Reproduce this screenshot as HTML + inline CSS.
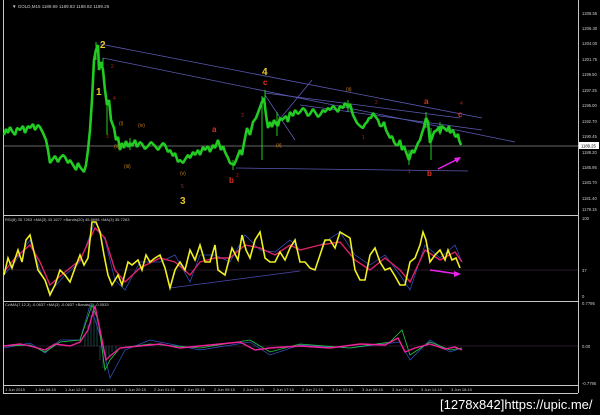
<!DOCTYPE html>
<html><head><meta charset="utf-8"><style>
html,body{margin:0;padding:0;background:#000;width:600px;height:415px;overflow:hidden}
svg{display:block}
text{font-family:"Liberation Sans",sans-serif}
</style></head><body>
<svg width="600" height="415" viewBox="0 0 600 415">
<rect width="600" height="415" fill="#000"/>
<g stroke="#c8c8c8" stroke-width="1" fill="none">
<line x1="3.5" y1="0" x2="3.5" y2="393"/>
<line x1="578.5" y1="0" x2="578.5" y2="393"/>
<line x1="3" y1="215.5" x2="578" y2="215.5"/>
<line x1="3" y1="301.5" x2="578" y2="301.5"/>
<line x1="3" y1="385.5" x2="578" y2="385.5"/>
<line x1="3" y1="393.5" x2="578" y2="393.5"/>
</g>
<line x1="4" y1="146" x2="578" y2="146" stroke="#888" stroke-width="0.8"/>
<line x1="4" y1="270" x2="578" y2="270" stroke="#553355" stroke-width="0.6"/>
<line x1="4" y1="346" x2="578" y2="346" stroke="#553355" stroke-width="0.6"/>
<text x="12" y="8" font-size="4.5" fill="#ccc">▼ GOLD,M15  1189.69 1189.83 1188.82 1189.25</text>
<g stroke="#5a5ab4" stroke-width="0.8" fill="none">
<line x1="100" y1="44" x2="482" y2="118"/>
<line x1="103" y1="58" x2="515" y2="142"/>
<line x1="236" y1="168" x2="468" y2="171"/>
<line x1="265" y1="95" x2="295" y2="140"/>
<line x1="275" y1="125" x2="312" y2="80"/>
<line x1="300" y1="105" x2="482" y2="130"/>
<line x1="265" y1="93" x2="460" y2="118"/>
</g>
<polyline fill="none" stroke="#22cc22" stroke-width="2.6" stroke-linejoin="bevel" points="4,135 6,129 8,133 10,127 12,131 15,135 17,128 20,130 23,126 25,133 28,126 30,128 33,124 35,130 38,125 40,127 43,133 46,140 48,150 50,163 52,160 55,156 58,162 60,158 63,155 65,157 68,163 70,160 73,165 76,170 78,163 80,167 84,172 86,165 88,150 90,130 92,100 94,60 96,50 98,45 99,70 101,62 103,70 105,90 107,105 109,100 111,120 114,128 116,140 118,137 120,150 122,143 124,148 126,141 128,147 130,143 132,146 135,140 137,147 140,142 142,144 145,149 148,146 151,142 155,146 158,150 160,147 163,143 165,145 168,152 170,150 173,156 175,153 178,162 180,160 183,163 186,158 188,155 190,158 193,152 195,155 198,150 200,155 203,147 205,150 208,146 210,152 213,145 215,148 218,140 221,150 223,146 225,152 228,158 230,163 234,165 237,158 240,150 242,155 244,143 247,128 250,135 253,122 256,118 259,110 262,102 264,98 266,115 268,128 270,122 272,127 274,120 276,124 278,126 280,118 282,120 286,116 288,122 290,112 293,116 295,110 298,114 300,112 303,108 305,110 308,116 310,114 313,109 315,112 318,117 320,115 323,110 325,112 328,108 330,110 333,106 335,108 338,112 340,106 343,108 345,103 348,107 350,104 353,115 355,119 357,123 360,126 363,128 365,124 367,122 369,118 371,118 373,113 375,116 378,120 380,126 382,126 384,122 386,130 388,134 390,138 392,136 394,142 396,145 398,145 400,140 402,150 404,146 406,152 409,160 412,150 414,153 416,148 418,143 420,140 422,133 424,127 426,118 428,122 430,143 432,138 434,132 437,130 439,127 440,133 442,126 444,128 447,131 449,126 450,133 453,130 455,136 456,137 458,134 459,140 461,145"/>
<g stroke="#22cc22" stroke-width="1">
<line x1="96" y1="42" x2="96" y2="60"/><line x1="103" y1="58" x2="103" y2="78"/><line x1="107" y1="105" x2="107" y2="135"/><line x1="130" y1="138" x2="130" y2="150"/><line x1="233" y1="160" x2="233" y2="170"/><line x1="262" y1="96" x2="262" y2="160"/><line x1="265" y1="90" x2="265" y2="110"/><line x1="277" y1="112" x2="277" y2="136"/><line x1="348" y1="100" x2="348" y2="112"/><line x1="409" y1="150" x2="409" y2="165"/><line x1="426" y1="112" x2="426" y2="128"/><line x1="431" y1="128" x2="431" y2="160"/><line x1="440" y1="122" x2="440" y2="135"/>
</g>
<g font-weight="bold">
<text x="100" y="48" font-size="10" fill="#e8c82a">2</text>
<text x="96" y="95" font-size="10" fill="#e8c82a">1</text>
<text x="180" y="204" font-size="10" fill="#e8c82a">3</text>
<text x="262" y="75" font-size="10" fill="#e8c82a">4</text>
<text x="263" y="85" font-size="8" fill="#e03020">c</text>
<text x="212" y="132" font-size="8" fill="#e03020">a</text>
<text x="229" y="183" font-size="8" fill="#e03020">b</text>
<text x="424" y="104" font-size="8" fill="#e03020">a</text>
<text x="427" y="176" font-size="8" fill="#e03020">b</text>
<text x="458" y="117" font-size="8" fill="#e03020">c</text>
</g>
<g font-size="5" fill="#c08020">
<text x="119" y="125">(i)</text><text x="138" y="127">(iv)</text><text x="114" y="148">(ii)</text>
<text x="124" y="168">(iii)</text><text x="180" y="175">(v)</text><text x="276" y="147">(ii)</text><text x="346" y="91">(ii)</text>
</g>
<g font-size="5" fill="#b02020">
<text x="111" y="68">2</text><text x="113" y="100">4</text><text x="106" y="138">3</text><text x="181" y="188">5</text>
<text x="241" y="117">3</text><text x="236" y="177">2</text><text x="375" y="104">2</text><text x="362" y="139">1</text><text x="408" y="173">1</text><text x="460" y="105">4</text>
</g>
<polyline points="438,169 458,159" stroke="#ee22ee" stroke-width="1.5" fill="none"/>
<polygon points="461,157 454,158 457,163" fill="#ee22ee"/>
<g font-size="4.2" fill="#ccc">
<text x="582" y="15">1208.55</text><text x="582" y="30">1206.30</text><text x="582" y="45">1204.00</text>
<text x="582" y="61">1201.75</text><text x="582" y="76">1199.50</text><text x="582" y="92">1197.25</text>
<text x="582" y="107">1195.00</text><text x="582" y="123">1192.70</text><text x="582" y="138">1190.45</text>
<text x="582" y="154">1188.20</text><text x="582" y="169">1185.95</text><text x="582" y="184">1183.70</text><text x="582" y="200">1181.40</text>
<text x="582" y="211">1179.15</text><text x="582" y="220">100</text><text x="582" y="272">37</text><text x="582" y="298">0</text>
<text x="582" y="305">0.7795</text><text x="582" y="348">0.00</text><text x="582" y="385">-0.7795</text>
</g>
<rect x="579" y="142" width="20" height="7" fill="#fff"/>
<text x="581" y="147.5" font-size="4.2" fill="#000">1189.25</text>
<g font-size="4" fill="#ccc">
<text x="5" y="221">RSI(8) 35.7263   ×MA(3) 43.1677   ×Bands(20) 45.8698   ×MA(3) 35.7263</text>
<text x="5" y="306">CciMA(7,12,3) -0.0637   ×MA(3) -0.0637   ×Bands(3) -0.0533</text>
<text x="5" y="391">1 Jun 2015</text><text x="35" y="391">1 Jun 08:15</text><text x="65" y="391">1 Jun 12:15</text>
<text x="95" y="391">1 Jun 16:15</text><text x="125" y="391">1 Jun 20:15</text><text x="154" y="391">2 Jun 01:15</text>
<text x="184" y="391">2 Jun 05:15</text><text x="214" y="391">2 Jun 09:15</text><text x="243" y="391">2 Jun 13:15</text>
<text x="273" y="391">2 Jun 17:15</text><text x="302" y="391">2 Jun 21:15</text><text x="332" y="391">3 Jun 02:15</text>
<text x="362" y="391">3 Jun 06:15</text><text x="392" y="391">3 Jun 10:15</text><text x="421" y="391">3 Jun 14:15</text><text x="451" y="391">3 Jun 18:15</text>
</g>
<line x1="170" y1="288" x2="300" y2="271" stroke="#4a4ab0" stroke-width="0.8"/>
<polyline fill="none" stroke="#3355cc" stroke-width="0.7" points="4,275 15,262 30,240 40,270 50,292 65,275 80,262 95,222 105,240 115,280 125,290 140,262 160,262 175,255 190,282 200,255 215,255 230,262 245,235 260,250 275,252 290,240 300,250 320,245 340,232 355,255 370,265 385,255 400,275 410,290 425,245 440,258 455,245 462,262"/>
<polyline fill="none" stroke="#dd2266" stroke-width="1.4" points="4,272 15,258 30,245 40,262 50,285 65,272 80,260 95,228 105,238 115,270 125,282 140,268 160,258 175,262 190,275 200,262 215,258 230,258 245,245 260,248 275,255 290,245 300,250 320,245 340,242 355,260 370,270 385,258 400,270 410,282 425,250 440,260 455,252 462,262"/>
<polyline fill="none" stroke="#f0f020" stroke-width="1.6" points="4,275 8,258 12,268 18,250 22,262 26,240 30,235 34,252 38,270 45,280 50,295 55,285 60,270 65,275 70,282 75,268 80,255 84,265 88,258 92,222 96,222 100,232 104,255 108,275 112,285 118,275 122,285 128,262 132,265 138,260 142,270 146,255 150,262 155,258 160,255 165,268 170,288 175,270 180,262 185,270 190,250 195,260 200,245 205,262 210,262 215,245 218,270 225,275 232,248 238,260 242,235 246,250 250,258 255,240 260,232 265,258 270,262 275,262 280,252 285,260 290,248 295,240 300,262 305,262 310,268 315,270 320,255 325,240 330,240 335,248 340,232 345,235 350,238 355,270 360,280 365,280 370,255 375,248 380,262 385,270 390,268 395,276 400,285 405,285 410,262 415,258 420,245 423,232 426,240 430,262 435,255 440,250 445,260 448,250 452,260 456,258 460,268"/>
<polyline points="430,270 458,274" stroke="#ee22ee" stroke-width="1.5" fill="none"/>
<polygon points="461,274 454,271 454,277" fill="#ee22ee"/>
<g stroke="#338888" stroke-width="0.5">
<line x1="85" y1="346" x2="85" y2="335"/><line x1="88" y1="346" x2="88" y2="325"/><line x1="91" y1="346" x2="91" y2="315"/><line x1="94" y1="346" x2="94" y2="305"/><line x1="97" y1="346" x2="97" y2="318"/><line x1="100" y1="346" x2="100" y2="360"/><line x1="103" y1="346" x2="103" y2="368"/><line x1="106" y1="346" x2="106" y2="362"/><line x1="109" y1="346" x2="109" y2="356"/><line x1="112" y1="346" x2="112" y2="352"/><line x1="116" y1="346" x2="116" y2="350"/>
</g>
<polyline fill="none" stroke="#3355cc" stroke-width="0.7" points="4,348 30,343 45,353 60,340 80,340 90,305 100,335 110,378 125,350 150,340 200,350 250,342 270,355 300,345 350,348 400,342 410,360 430,340 450,352 462,348"/>
<polyline fill="none" stroke="#22cc44" stroke-width="0.8" points="4,346 30,345 45,352 60,342 80,340 92,305 98,320 105,370 110,360 120,348 150,344 200,348 250,340 270,352 300,344 350,348 390,342 402,330 410,355 430,342 450,350 462,348"/>
<polyline fill="none" stroke="#ee2299" stroke-width="1.4" points="4,346 20,344 30,346 45,350 55,344 70,346 80,342 88,330 95,306 100,330 106,360 110,356 120,348 140,346 160,344 180,348 200,346 220,344 240,342 255,350 270,348 300,346 330,348 360,344 385,345 398,338 405,352 415,348 430,344 445,349 455,347 462,350"/>
<text x="440" y="409" font-size="13" fill="#fff">[1278x842]https://upic.me/</text>
</svg>
</body></html>
